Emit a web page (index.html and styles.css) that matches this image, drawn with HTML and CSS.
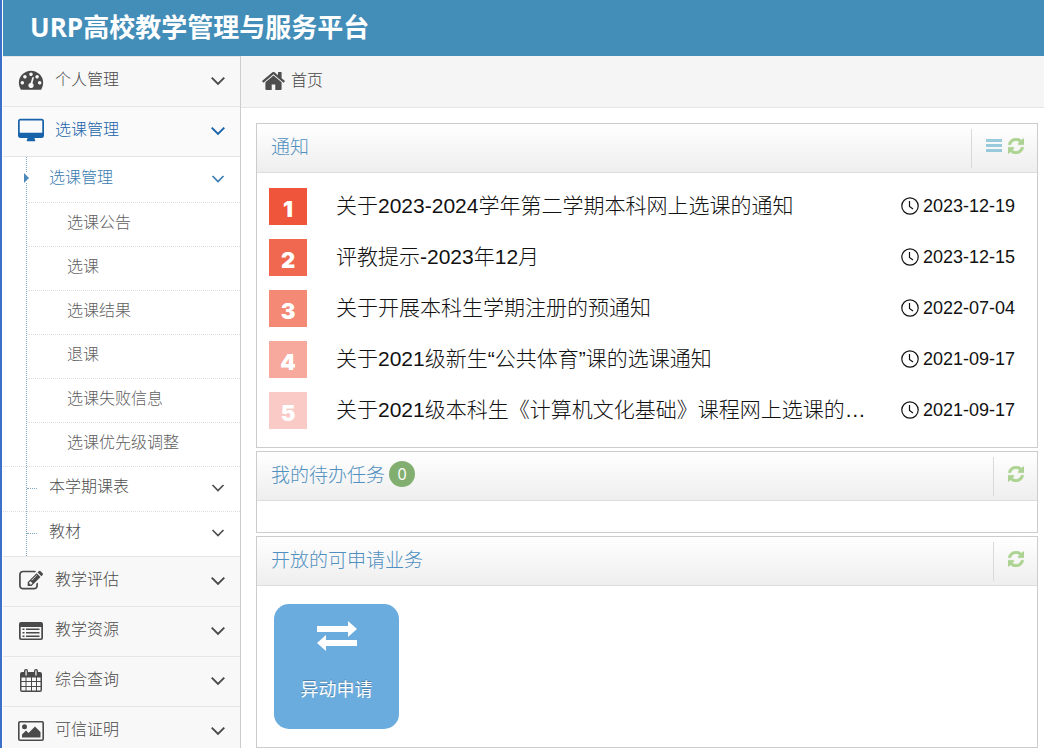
FILE: index.html
```html
<!DOCTYPE html>
<html lang="zh-CN">
<head>
    <meta charset="UTF-8">
    <meta name="viewport" content="width=device-width, initial-scale=1.0">
    <title>URP高校教学管理与服务平台</title>
    <link rel="stylesheet" href="styles.css">
</head>
<body>
    <!-- shared icons -->
    <svg class="sprite" aria-hidden="true">
        <symbol id="i-down" viewBox="0 0 14 14"><path d="M1.500 4L7 9.500l5.500-5.500" fill="none" stroke="currentColor" stroke-width="1.700"/></symbol>
        <symbol id="i-refresh" viewBox="128 128 1536 1536"><path stroke="currentColor" stroke-width="50" d="M1639 1056q0 5-1 7-64 268-268 434.500T892 1664q-146 0-282.500-55T366 1452l-129 129q-19 19-45 19t-45-19-19-45v-448q0-26 19-45t45-19h448q26 0 45 19t19 45-19 45l-137 137q71 66 161 102t187 36q134 0 250-65t186-179q11-17 53-117 8-23 30-23h192q13 0 22.500 9.500t9.500 22.500zm25-800v448q0 26-19 45t-45 19h-448q-26 0-45-19t-19-45 19-45l138-138Q1097 384 896 384q-134 0-250 65T460 628q-11 17-53 117-8 23-30 23H178q-13 0-22.500-9.500T146 736v-7q65-268 270-434.500T896 128q146 0 284 55.500T1425 340l130-129q19-19 45-19t45 19 19 45z"/></symbol>
        <symbol id="i-clock" viewBox="0 0 18 18"><circle cx="9" cy="9" r="8.200" fill="none" stroke="currentColor" stroke-width="1.200"/><path d="M8.500 4v5.500l3.500 2.500" fill="none" stroke="currentColor" stroke-width="1.200"/></symbol>
    </svg>

    <header class="navbar">
        <h1 class="brand">URP高校教学管理与服务平台</h1>
    </header>

    <div class="layout">
        <nav class="sidebar">
            <ul class="menu">
                <li class="menu-item">
                    <a href="#">
                        <svg class="menu-icon" viewBox="-60 60 1912 1912"><path d="M384 1152q0-53-37.500-90.500T256 1024t-90.500 37.500T128 1152t37.500 90.500T256 1280t90.500-37.500T384 1152zm192-448q0-53-37.500-90.500T448 576t-90.500 37.500T320 704t37.500 90.500T448 832t90.500-37.500T576 704zm428 481l101-382q6-26-7.500-48.500T1059 725t-48 6.500-30 39.500l-101 382q-60 5-107 43.500t-63 98.500q-20 77 20 146t117 89 146-20 89-117q16-60-6-117t-72-91zm660-33q0-53-37.500-90.500T1536 1024t-90.500 37.500-37.500 90.500 37.500 90.500 90.500 37.500 90.500-37.500T1664 1152zm-640-640q0-53-37.500-90.500T896 384t-90.500 37.500T768 512t37.500 90.500T896 640t90.500-37.500T1024 512zm448 192q0-53-37.500-90.500T1344 576t-90.500 37.500T1216 704t37.500 90.500T1344 832t90.500-37.500T1472 704zm320 448q0 261-141 483-19 29-54 29H195q-35 0-54-29Q0 1414 0 1152q0-182 71-348t191-286 286-191 348-71 348 71 286 191 191 286 71 348z"/></svg>
                        <span class="menu-text">个人管理</span>
                        <svg class="arrow"><use href="#i-down"/></svg>
                    </a>
                </li>
                <li class="menu-item open">
                    <a href="#">
                        <svg class="menu-icon" viewBox="-64 -60 1920 1920"><path d="M1728 992V160q0-13-9.500-22.500T1696 128H96q-13 0-22.500 9.500T64 160v832q0 13 9.500 22.500T96 1024h1600q13 0 22.500-9.500t9.500-22.500zm128-832v1088q0 66-47 113t-113 47h-544q0 37 16 77.500t32 71 16 43.500q0 26-19 45t-45 19H640q-26 0-45-19t-19-45q0-14 16-44t32-70 16-78H96q-66 0-113-47t-47-113V160Q-64 94-17 47T96 0h1600q66 0 113 47t47 113z"/></svg>
                        <span class="menu-text">选课管理</span>
                        <svg class="arrow"><use href="#i-down"/></svg>
                    </a>
                    <ul class="submenu">
                        <li class="submenu-item active">
                            <a href="#"><span class="menu-text">选课管理</span><svg class="arrow"><use href="#i-down"/></svg></a>
                            <ul class="leafs">
                                <li><a href="#">选课公告</a></li>
                                <li><a href="#">选课</a></li>
                                <li><a href="#">选课结果</a></li>
                                <li><a href="#">退课</a></li>
                                <li><a href="#">选课失败信息</a></li>
                                <li><a href="#">选课优先级调整</a></li>
                            </ul>
                        </li>
                        <li class="submenu-item">
                            <a href="#"><span class="menu-text">本学期课表</span><svg class="arrow"><use href="#i-down"/></svg></a>
                        </li>
                        <li class="submenu-item">
                            <a href="#"><span class="menu-text">教材</span><svg class="arrow"><use href="#i-down"/></svg></a>
                        </li>
                    </ul>
                </li>
                <li class="menu-item">
                    <a href="#">
                        <svg class="menu-icon" viewBox="-80 -70 1940 1940"><path d="M888 1184l116-116-152-152-116 116v56h96v96h56zm440-720q-16-16-33 1L945 815q-17 17-1 33t33-1l350-350q17-17 1-33zm80 594v190q0 119-84.500 203.500T1120 1536H288q-119 0-203.500-84.500T0 1248V416q0-119 84.500-203.500T288 128h832q63 0 117 25 15 7 18 23 3 17-9 29l-49 49q-14 14-32 8-23-6-45-6H288q-66 0-113 47t-47 113v832q0 66 47 113t113 47h832q66 0 113-47t47-113v-126q0-13 9-22l64-64q15-15 35-7t20 29zm-96-738l288 288-672 672H640V992zm444 132l-92 92-288-288 92-92q28-28 68-28t68 28l152 152q28 28 28 68t-28 68z"/></svg>
                        <span class="menu-text">教学评估</span>
                        <svg class="arrow"><use href="#i-down"/></svg>
                    </a>
                </li>
                <li class="menu-item">
                    <a href="#">
                        <svg class="menu-icon" viewBox="0 0 26 26"><path fill-rule="evenodd" d="M3 4h20q2 0 2 2v14q0 2-2 2H3q-2 0-2-2V6q0-2 2-2zm-.3 5v11l.6.500h19.400l.6-.500V9zM4.500 10.500h2V12h-2zm3.500 0h13.500V12H8zM4.500 14h2v1.500h-2zM8 14h13.500v1.500H8zm-3.500 3.500h2V19h-2zm3.500 0h13.500V19H8z"/></svg>
                        <span class="menu-text">教学资源</span>
                        <svg class="arrow"><use href="#i-down"/></svg>
                    </a>
                </li>
                <li class="menu-item">
                    <a href="#">
                        <svg class="menu-icon" viewBox="0 0 26 26"><path fill-rule="evenodd" d="M4 4h2V3q0-2 2-2t2 2v1h6V3q0-2 2-2t2 2v1h2q2 0 2 2v16q0 2-2 2H4q-2 0-2-2V6q0-2 2-2zm3.500-1.500v5h1.200v-5zm9.800 0v5h1.200v-5zM3.500 9.500V13h4V9.500zm5 0V13H13V9.500zm5.500 0V13h4V9.500zm5 0V13h3.500V9.500zM3.500 14v4h4v-4zm5 0v4H13v-4zm5.500 0v4h4v-4zm5 0v4h3.500v-4zM3.500 19v3.500h4V19zm5 0v3.500H13V19zm5.500 0v3.500h4V19zm5 0v3.500h3.500V19z"/></svg>
                        <span class="menu-text">综合查询</span>
                        <svg class="arrow"><use href="#i-down"/></svg>
                    </a>
                </li>
                <li class="menu-item">
                    <a href="#">
                        <svg class="menu-icon" viewBox="0 0 26 26"><rect x=".8" y="3.800" width="24.400" height="18.400" rx="1.200" fill="none" stroke="currentColor" stroke-width="1.600"/><circle cx="6.500" cy="8.800" r="2.500"/><path d="M4 19.500v-3l4-4 2.500 2.500L17 8.500l5.500 5.500v5.500z"/></svg>
                        <span class="menu-text">可信证明</span>
                        <svg class="arrow"><use href="#i-down"/></svg>
                    </a>
                </li>
            </ul>
        </nav>

        <main class="main">
            <div class="breadcrumb">
                <svg class="home-icon" viewBox="90 256 1612 1280"><path d="M1472 992v480q0 26-19 45t-45 19h-384v-384H768v384H384q-26 0-45-19t-19-45V992q0-1 .5-3t.5-3l575-474 575 474q1 2 1 6zm223-69l-62 74q-8 9-21 11h-3q-13 0-21-7L896 424l-692 577q-12 8-24 7-13-2-21-11l-62-74q-8-10-7-23.500t11-21.500l719-599q32-26 76-26t76 26l244 204V288q0-14 9-23t23-9h192q14 0 23 9t9 23v408l219 182q10 8 11 21.500t-7 23.500z"/></svg>
                <a href="#">首页</a>
            </div>

            <div class="content">
                <section class="widget">
                    <div class="widget-header">
                        <h2>通知</h2>
                        <div class="toolbar">
                            <button type="button" class="tool list" aria-label="更多"><svg viewBox="0 0 16 16"><path d="M0 1h16v3H0zM0 6h16v3H0zM0 11h16v3H0z"/></svg></button>
                            <button type="button" class="tool" aria-label="刷新"><svg><use href="#i-refresh"/></svg></button>
                        </div>
                    </div>
                    <ul class="notices">
                        <li>
                            <span class="rank rank-1">1</span>
                            <a href="#">关于2023-2024学年第二学期本科网上选课的通知</a>
                            <time><svg><use href="#i-clock"/></svg>2023-12-19</time>
                        </li>
                        <li>
                            <span class="rank rank-2">2</span>
                            <a href="#">评教提示-2023年12月</a>
                            <time><svg><use href="#i-clock"/></svg>2023-12-15</time>
                        </li>
                        <li>
                            <span class="rank rank-3">3</span>
                            <a href="#">关于开展本科生学期注册的预通知</a>
                            <time><svg><use href="#i-clock"/></svg>2022-07-04</time>
                        </li>
                        <li>
                            <span class="rank rank-4">4</span>
                            <a href="#">关于2021级新生“公共体育”课的选课通知</a>
                            <time><svg><use href="#i-clock"/></svg>2021-09-17</time>
                        </li>
                        <li>
                            <span class="rank rank-5">5</span>
                            <a href="#">关于2021级本科生《计算机文化基础》课程网上选课的…</a>
                            <time><svg><use href="#i-clock"/></svg>2021-09-17</time>
                        </li>
                    </ul>
                </section>

                <section class="widget">
                    <div class="widget-header">
                        <h2>我的待办任务</h2>
                        <span class="badge">0</span>
                        <div class="toolbar">
                            <button type="button" class="tool" aria-label="刷新"><svg><use href="#i-refresh"/></svg></button>
                        </div>
                    </div>
                    <div class="todo"></div>
                </section>

                <section class="widget">
                    <div class="widget-header">
                        <h2>开放的可申请业务</h2>
                        <div class="toolbar">
                            <button type="button" class="tool" aria-label="刷新"><svg><use href="#i-refresh"/></svg></button>
                        </div>
                    </div>
                    <div class="apps">
                        <button type="button" class="app">
                            <svg viewBox="0 0 42 32"><path d="M1 6h31V1l9 8-9 8v-5H1zM41 20H10v-5l-9 8 9 8v-5h31z"/></svg>
                            <span>异动申请</span>
                        </button>
                    </div>
                </section>
            </div>
        </main>
    </div>
</body>
</html>
```
FILE: styles.css
```css
* {
    margin: 0;
    padding: 0;
    box-sizing: border-box;
}

body {
    display: flex;
    flex-direction: column;
    height: 100vh;
    padding-left: 1px;
    border-left: 2px solid #3a70c8;
    overflow: hidden;
    font-family: "Open Sans", "Noto Sans CJK SC", sans-serif;
    font-size: 16px;
    font-weight: 300;
    color: #393939;
    background: #fff;
}

ul {
    list-style: none;
}

a {
    color: inherit;
    text-decoration: none;
}

svg {
    flex: none;
    fill: currentColor;
}

button {
    border: 0;
    background: none;
    font: inherit;
    cursor: pointer;
}

.sprite {
    display: none;
}

.navbar {
    flex: none;
    height: 56px;
    padding-left: 27px;
    background: #438eb9;
}

.brand {
    font-size: 26px;
    font-weight: 700;
    line-height: 54px;
    color: #fff;
}

.layout {
    display: flex;
    flex: 1;
    min-height: 0;
}

/* sidebar */
.sidebar {
    flex: none;
    width: 238px;
    border-right: 1px solid #ccc;
    overflow-y: auto;
    scrollbar-width: none;
}

.menu-item > a {
    display: flex;
    align-items: center;
    height: 50px;
    padding: 0 14px 2px 15px;
    border-top: 1px solid #e5e5e5;
    background: #f8f8f8;
    color: #4a4a4a;
}

.menu-item.open > a {
    background: #fafafa;
    color: #1963aa;
}

.menu-icon {
    width: 26px;
    height: 26px;
    margin-right: 11px;
}

.menu-text {
    flex: 1;
    padding-bottom: 4px;
    line-height: 24px;
}

.arrow {
    width: 16px;
    height: 16px;
}

.submenu {
    position: relative;
    border-top: 1px solid #e5e5e5;
    background: #fff;
}

/* tree line */
.submenu::before {
    content: "";
    position: absolute;
    top: 0;
    bottom: 0;
    left: 23px;
    border-left: 1px dotted #7fa6c2;
}

.submenu-item > a {
    position: relative;
    display: flex;
    align-items: center;
    height: 45px;
    padding: 0 14px 2px 46px;
    border-top: 1px dotted #ddd;
    color: #4f4f4f;
}

.submenu-item:first-child > a {
    border-top: 0;
}

.submenu-item > a::before {
    content: "";
    position: absolute;
    top: 21px;
    left: 24px;
    width: 10px;
    border-top: 1px dotted #7fa6c2;
}

.submenu-item.active > a {
    color: #3a7cb0;
}

.submenu-item.active > a::before {
    top: 16px;
    left: 21px;
    width: 6px;
    border: 5px solid #fff;
    border-left-color: #4b88b7;
    border-right: 0;
}

.submenu .arrow {
    width: 14px;
    height: 14px;
    margin-right: 1px;
}

.leafs a {
    display: block;
    height: 44px;
    margin-left: 25px;
    padding-left: 39px;
    border-top: 1px dotted #ddd;
    line-height: 39px;
    color: #606060;
}

/* main */
.main {
    flex: 1;
    min-width: 0;
    overflow: hidden;
}

.breadcrumb {
    display: flex;
    align-items: center;
    gap: 6px;
    height: 52px;
    padding: 0 0 2px 21px;
    border-bottom: 1px solid #e5e5e5;
    background: #f5f5f5;
    color: #444;
}

.breadcrumb a {
    padding-bottom: 2px;
    line-height: 24px;
}

.home-icon {
    width: 23px;
    height: 18px;
    color: #4d4d4d;
}

.content {
    display: flex;
    flex-direction: column;
    gap: 3px;
    padding: 15px 6px 0 15px;
}

.widget {
    border: 1px solid #ccc;
}

.widget-header {
    display: flex;
    align-items: center;
    height: 49px;
    padding: 0 13px 0 14px;
    border-bottom: 1px solid #ddd;
    background: linear-gradient(#fff, #eee);
    color: #5090c0;
}

.widget-header h2 {
    padding-bottom: 3px;
    font-size: 19px;
    font-weight: 300;
    line-height: 28px;
}

.badge {
    width: 26px;
    height: 26px;
    margin: 0 0 4px 4px;
    border-radius: 50%;
    background: #82af6f;
    color: #fff;
    font-weight: 400;
    line-height: 26px;
    text-align: center;
}

.toolbar {
    display: flex;
    align-items: center;
    gap: 6px;
    height: 39px;
    margin-left: auto;
    padding: 0 0 4px 14px;
    border-left: 1px solid #d9d9d9;
}

.tool {
    width: 16px;
    height: 16px;
    color: #acd392;
}

.tool.list {
    color: #99cadb;
}

.tool svg {
    display: block;
    width: 16px;
    height: 16px;
}

.notices {
    padding: 8px 22px 11px 12px;
}

.notices li {
    display: flex;
    align-items: center;
    height: 51px;
    font-family: "Liberation Sans", "Noto Sans CJK SC", sans-serif;
    color: #111;
}

.notices a {
    flex: 1;
    min-width: 0;
    padding-bottom: 2px;
    overflow: hidden;
    font-size: 21px;
    line-height: 32px;
    text-overflow: ellipsis;
    white-space: nowrap;
}

.notices time {
    display: flex;
    align-items: center;
    gap: 4px;
    padding-bottom: 2px;
    font-size: 18px;
    line-height: 24px;
}

.notices time svg {
    width: 18px;
    height: 18px;
}

.rank {
    width: 38px;
    height: 37px;
    margin-right: 29px;
    padding-top: 3px;
    color: #fff;
    font-family: Inter, sans-serif;
    font-size: 22px;
    font-weight: 900;
    line-height: 37px;
    text-align: center;
}

.rank-1 { background: #ef553a; }
.rank-2 { background: #f0684f; }
.rank-3 { background: #f48a76; }
.rank-4 { background: #f7a99d; }
.rank-5 { background: #facbc6; }

.todo {
    height: 31px;
}

.apps {
    padding: 18px 17px;
}

.app {
    display: flex;
    flex-direction: column;
    align-items: center;
    gap: 23px;
    width: 125px;
    height: 125px;
    padding-top: 16px;
    border-radius: 15px;
    background: #6aacde;
    color: #fff;
    font-size: 18px;
    font-weight: 400;
    line-height: 28px;
    text-shadow: 0 -1px 0 rgba(0, 0, 0, 0.25);
}

.app svg {
    width: 42px;
    height: 32px;
}
```
